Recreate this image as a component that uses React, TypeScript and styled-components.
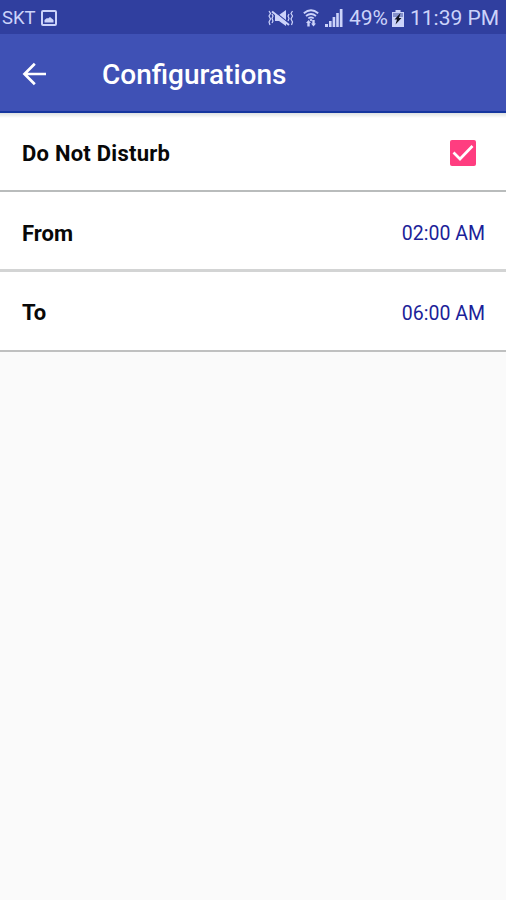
import React from "react";
import styled, { createGlobalStyle } from "styled-components";

const GlobalStyle = createGlobalStyle`
  * { box-sizing: border-box; }
  body { margin: 0; background: #fafafa; font-family: Roboto, "Liberation Sans", sans-serif; }
`;

const Screen = styled.div`
  width: 100%;
  min-height: 900px;
  display: flex;
  flex-direction: column;
  background: #fafafa;
`;

const StatusBar = styled.header`
  height: 34px;
  padding: 2px 7px 0 2px;
  display: flex;
  align-items: center;
  justify-content: space-between;
  background: #303f9f;
  color: #ccd3fa;
  white-space: nowrap;
`;

const StatusGroup = styled.div`
  display: flex;
  align-items: center;
`;

const Carrier = styled.span`
  font-size: 18.5px;
  font-weight: 400;
  width: 34px;
  margin-right: 5px;
  padding-bottom: 1px;
`;

const StatusIcon = styled.svg<{ $gap: number }>`
  display: block;
  flex: none;
  margin-right: ${(p) => p.$gap}px;
`;

const StatusText = styled.span<{ $width: number; $gap?: number }>`
  width: ${(p) => p.$width}px;
  margin-right: ${(p) => p.$gap ?? 0}px;
  font-size: 21px;
  line-height: 30px;
`;

const Toolbar = styled.div`
  height: 79px;
  padding: 3px 22px 0;
  display: flex;
  align-items: center;
  background: #3f51b5;
  border-bottom: 2px solid #16369f;
  color: #fff;
`;

const BackButton = styled.button`
  width: 24px;
  height: 24px;
  padding: 0;
  margin-right: 56px;
  border: 0;
  background: none;
  color: inherit;
`;

const Title = styled.h1`
  margin: 0;
  padding-top: 2px;
  font-size: 28px;
  font-weight: 500;
  line-height: 36px;
`;

const Settings = styled.main`
  background: #fff;
`;

const Row = styled.div<{ $height: number; $line: string; $lineWidth?: number }>`
  height: ${(p) => p.$height}px;
  padding: 2px 21px 0 22px;
  display: flex;
  align-items: center;
  justify-content: space-between;
  border-bottom: ${(p) => p.$lineWidth ?? 2}px solid ${(p) => p.$line};

  &:first-child {
    background: linear-gradient(#dde1e1, #fff 5px);
  }
`;

const Label = styled.span<{ $spacing?: number; $drop?: number }>`
  padding-top: ${(p) => p.$drop ?? 2}px;
  font-size: 22px;
  font-weight: 700;
  line-height: 30px;
  letter-spacing: ${(p) => p.$spacing ?? 0}px;
  color: #080808;
`;

const Time = styled.span`
  padding-top: 4px;
  font-size: 19.5px;
  line-height: 28px;
  color: #1c1f99;
`;

const Checkbox = styled.span`
  width: 26px;
  height: 26px;
  margin-right: 9px;
  border-radius: 2px;
  background: #ff3d80;
`;

export default function App() {
  return (
    <>
      <GlobalStyle />
      <Screen>
        <StatusBar>
          <StatusGroup>
            <Carrier>SKT</Carrier>
            <StatusIcon $gap={0} width="16" height="16" viewBox="0 0 16 16">
              <rect x="1" y="1" width="14" height="14" rx="1" fill="none" stroke="currentColor" strokeWidth="2" />
              <path d="M3.500 12.500V10l2.500-2 1 .5L9 7l3.500 3v2.500z" fill="currentColor" />
            </StatusIcon>
          </StatusGroup>
          <StatusGroup>
            <StatusIcon $gap={9} width="26" height="16" viewBox="0 0 26 16">
              <path d="M7 5h4l7-5v16l-7-5H7z" fill="currentColor" />
              <path d="M5 .5l17 13.500" stroke="#303f9f" strokeWidth="1.200" />
              <path d="M4 1.500L21 15" stroke="currentColor" strokeWidth="2" />
              <path
                d="M1 1l1.500 2.500L1 6l1.500 3L1 12l1 3M4 4l1 2-1 2.500 1 2.500-1 2M24.500 1L23 3.500 24.500 6 23 9l1.500 3-1 3M21 4l-1 2 1 2.500-1 2.500"
                fill="none"
                stroke="currentColor"
                strokeWidth="1.200"
              />
            </StatusIcon>
            <StatusIcon $gap={6} width="16" height="18" viewBox="0 0 16 18">
              <g fill="none" stroke="currentColor" strokeWidth="1.800">
                <path d="M.8 4.200Q8-1.800 15.200 4.200M3 7q5-4 10 0M5.300 9.400q2.700-2 5.400 0" />
              </g>
              <path d="M8 9.500l1.500 1.500L8 12.500 6.500 11zM3 14l2.500-3L8 14H6.700v3.500H4.300V14zM8 14.500h1.300V11h2.400v3.500H13l-2.500 3z" fill="currentColor" />
            </StatusIcon>
            <StatusIcon $gap={6} width="18" height="18" viewBox="0 0 18 18">
              <path d="M0 15h3v3H0zM4 12h2.600v6H4zM7.600 8h2.600v10H7.600zM11.200 4h2.600v14h-2.600zM14.800 0h2.700v18h-2.700z" fill="currentColor" />
            </StatusIcon>
            <StatusText $width={40} $gap={3}>49%</StatusText>
            <StatusIcon $gap={6} width="12" height="17" viewBox="0 0 12 17">
              <path d="M3.500 0h5v2H12v15H0V2h3.500z" fill="currentColor" />
              <path d="M1 3h10v4H1z" fill="#8490cb" />
              <path d="M8.500 3L2.500 9.500H5L3.500 14.500 9.500 8H7z" fill="#10131f" />
            </StatusIcon>
            <StatusText $width={89}>11:39 PM</StatusText>
          </StatusGroup>
        </StatusBar>
        <Toolbar>
          <BackButton aria-label="Back">
            <svg width="24" height="24" viewBox="0 0 24 24" fill="none" stroke="currentColor" strokeWidth="2.700">
              <path d="M24 12H3M12.800 1.800L2.500 12l10.300 10.200" />
            </svg>
          </BackButton>
          <Title>Configurations</Title>
        </Toolbar>
        <Settings>
          <Row $height={79} $line="#b9bcbc">
            <Label $spacing={0.25}>Do Not Disturb</Label>
            <Checkbox role="checkbox" aria-checked="true" aria-label="Do Not Disturb">
              <svg width="26" height="26" viewBox="0 0 26 26" fill="none" stroke="#fff" strokeWidth="2.700">
                <path d="M3.500 12.500l6.500 6.500L22.500 6" />
              </svg>
            </Checkbox>
          </Row>
          <Row $height={80} $line="#d3d4d4" $lineWidth={3}>
            <Label $drop={4}>From</Label>
            <Time>02:00 AM</Time>
          </Row>
          <Row $height={80} $line="#bfc0c0">
            <Label>To</Label>
            <Time>06:00 AM</Time>
          </Row>
        </Settings>
      </Screen>
    </>
  );
}
